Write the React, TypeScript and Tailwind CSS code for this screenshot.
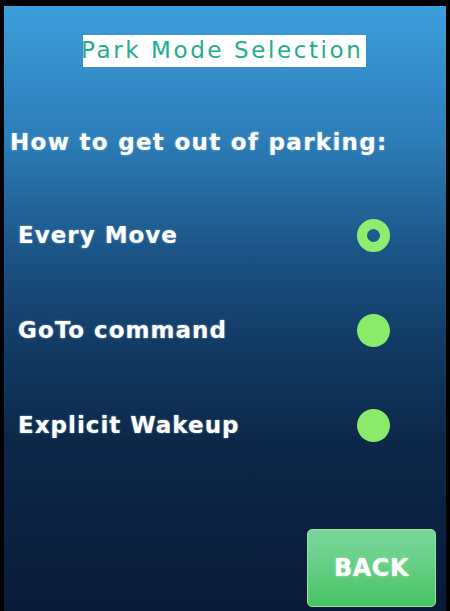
const options = [
  { label: 'Every Move', selected: true },
  { label: 'GoTo command', selected: false },
  { label: 'Explicit Wakeup', selected: false },
];

function Radio({ selected }: { selected: boolean }) {
  if (selected) {
    return <div className="w-[33px] h-[33px] rounded-full border-[10px] border-[#8eec70] shrink-0" />;
  }
  return <div className="w-[33px] h-[33px] rounded-full bg-[#8aea6a] shrink-0" />;
}

export default function App() {
  return (
    <div className="w-[450px] h-[611px] bg-black pt-[6px] px-[4px] overflow-hidden">
      <div
        className="h-full flex flex-col bg-[linear-gradient(to_bottom,#3c9edc_0%,#2c7db8_22%,#1c5588_40%,#123c66_55%,#0c2849_72%,#0a1b38_100%)] text-white font-['DejaVu_Sans',sans-serif]"
      >
        <div className="mt-[29px] ml-[79px] w-[283px] h-[32px] bg-white pt-[4px]">
          <span className="block text-[23px] leading-none tracking-[2.6px] text-[#22ad8c] -ml-[2px] whitespace-nowrap">
            Park Mode Selection
          </span>
        </div>

        <h1 className="mt-[64px] ml-[6px] text-[23px] leading-none font-bold tracking-[1.3px] whitespace-nowrap [text-shadow:0_0_2px_rgba(190,225,255,0.7)]">
          How to get out of parking:
        </h1>

        <div className="mt-[65px] ml-[14px] w-[372px] flex flex-col gap-[62px]">
          {options.map((o) => (
            <div key={o.label} className="h-[33px] flex items-center justify-between">
              <span className="text-[23px] leading-none font-bold tracking-[1px] whitespace-nowrap [text-shadow:0_0_2px_rgba(190,225,255,0.7)]">
                {o.label}
              </span>
              <Radio selected={o.selected} />
            </div>
          ))}
        </div>

        <button className="mt-[87px] self-end mr-[10px] w-[129px] h-[78px] rounded-[5px] border border-[#93e2a6] bg-[linear-gradient(to_bottom,#7ad69a_0%,#66d086_45%,#45c462_100%)] flex items-center justify-center">
          <span className="text-[24px] leading-none font-bold tracking-[0.5px] text-white [text-shadow:0_0_2px_rgba(255,255,255,0.6)]">
            BACK
          </span>
        </button>
      </div>
    </div>
  );
}
